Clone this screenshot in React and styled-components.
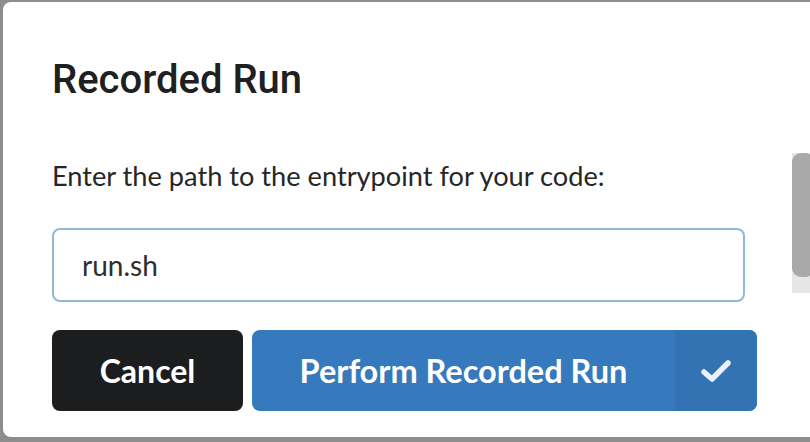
import React from 'react';
import styled, { createGlobalStyle } from 'styled-components';

const GlobalStyle = createGlobalStyle`
  html, body {
    margin: 0;
    padding: 0;
    background: #8d8d8d;
    overflow: hidden;
  }
  body {
    font-family: Lato, "Noto Sans", sans-serif;
  }
`;

const RecordedRunDialog = () => {
  return (
    <>
      <GlobalStyle />
      <Backdrop>
        <Modal role="dialog" aria-labelledby="recorded-run-title">
          <Title id="recorded-run-title">Recorded Run</Title>
          <Body>
            <Main>
              <Label htmlFor="entrypoint">Enter the path to the entrypoint for your code:</Label>
              <PathInput id="entrypoint" defaultValue="run.sh" />
            </Main>
            <ScrollTrack>
              <ScrollThumb />
            </ScrollTrack>
          </Body>
          <Footer>
            <CancelButton>Cancel</CancelButton>
            <SplitButton>
              <PrimaryLabel>Perform Recorded Run</PrimaryLabel>
              <ConfirmSegment>
                <svg width="32" height="24" viewBox="0 0 32 24" fill="none">
                  <path
                    d="M4 13 L12 20 L28 4"
                    stroke="#eaf1fa"
                    strokeWidth="5.5"
                    strokeLinecap="round"
                    strokeLinejoin="round"
                  />
                </svg>
              </ConfirmSegment>
            </SplitButton>
          </Footer>
        </Modal>
      </Backdrop>
    </>
  );
};

export default RecordedRunDialog;

// Styled Components
const Backdrop = styled.div`
  padding: 2px 0 0 3px;
  min-height: 100vh;
  box-sizing: border-box;
`;

const Modal = styled.div`
  width: 840px;
  height: 435px;
  box-sizing: border-box;
  background: #ffffff;
  border-radius: 8px;
  padding: 54px 0 26px 49px;
  display: flex;
  flex-direction: column;
`;

const Title = styled.h2`
  margin: 0;
  font-family: Roboto, "Liberation Sans", sans-serif;
  font-weight: 500;
  font-size: 40px;
  line-height: 48px;
  color: #202020;
`;

const Body = styled.div`
  margin-top: 49px;
  display: flex;
  align-items: flex-start;
`;

const Main = styled.div`
  width: 693px;
  padding-top: 3px;
  display: flex;
  flex-direction: column;
  gap: 32px;
`;

const Label = styled.label`
  font-size: 27.2px;
  line-height: 40px;
  color: #262626;
`;

const PathInput = styled.input`
  height: 74px;
  box-sizing: border-box;
  border: 2px solid #8fb9d8;
  border-radius: 8px;
  padding: 0 28px;
  font-family: Lato, "Noto Sans", sans-serif;
  font-size: 28px;
  color: #2e2e2e;
  outline: none;
  background: #fff;
`;

const ScrollTrack = styled.div`
  margin-left: 47px;
  width: 22px;
  height: 140px;
  background: #e6e6e6;
`;

const ScrollThumb = styled.div`
  height: 124px;
  background: #a9a9a9;
  border-radius: 9px;
`;

const Footer = styled.div`
  margin-top: 28px;
  display: flex;
  gap: 9px;
`;

const CancelButton = styled.button`
  width: 191px;
  height: 81px;
  border: none;
  border-radius: 8px;
  background: #1c1d1f;
  color: #ffffff;
  font-family: Lato, "Noto Sans", sans-serif;
  font-weight: 700;
  font-size: 32px;
  cursor: pointer;
`;

const SplitButton = styled.button`
  width: 505px;
  height: 81px;
  border: none;
  padding: 0;
  border-radius: 8px;
  overflow: hidden;
  background: #3779bd;
  display: flex;
  align-items: stretch;
  cursor: pointer;
`;

const PrimaryLabel = styled.span`
  flex: 1;
  display: flex;
  align-items: center;
  justify-content: center;
  color: #ffffff;
  font-family: Lato, "Noto Sans", sans-serif;
  font-weight: 700;
  font-size: 32.5px;
`;

const ConfirmSegment = styled.span`
  width: 82px;
  display: flex;
  align-items: center;
  justify-content: center;
  background: #3473b3;
`;
